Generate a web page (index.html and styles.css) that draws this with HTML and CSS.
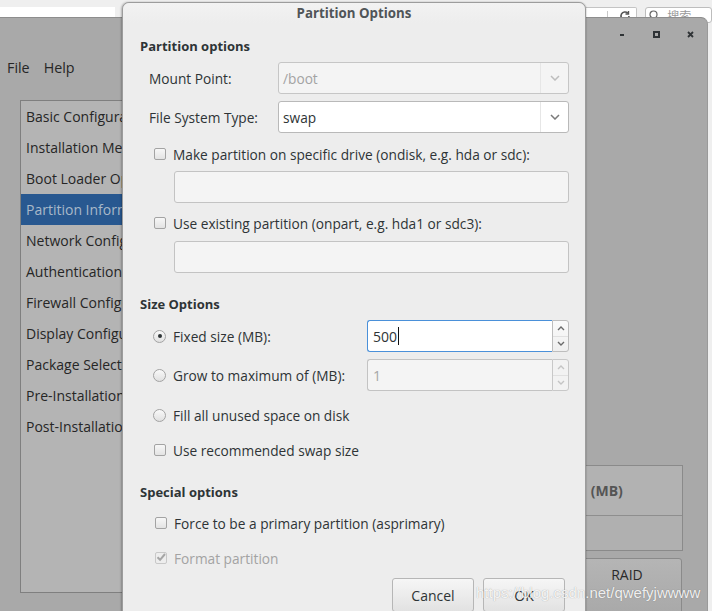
FILE: index.html
```html
<!DOCTYPE html>
<html>
<head>
<meta charset="utf-8">
<title>Partition Options</title>
<link rel="stylesheet" href="styles.css">
</head>
<body>
<div class="screen">
  <div class="browser-strip">
    <div class="addr-left"></div>
    <div class="addr-right">
      <span class="addr-sep"></span>
      <svg class="reload" width="12" height="12" viewBox="0 0 12 12"><path d="M10 6a4 4 0 1 1-1.2-2.9" fill="none" stroke="#555" stroke-width="1.6"/><path d="M9.5 1v3h-3" fill="none" stroke="#555" stroke-width="1.4"/></svg>
    </div>
    <div class="search">
      <svg width="10" height="10" viewBox="0 0 10 10"><circle cx="4.5" cy="4.5" r="3.5" fill="none" stroke="#666" stroke-width="1.2"/></svg>
      <span>搜索</span>
    </div>
  </div>

  <div class="app-window">
    <div class="titlebar">
      <span class="wbtn"><svg width="6" height="6" viewBox="0 0 6 6"><rect x="1" y="3" width="4" height="2" fill="#2f3336"/></svg></span>
      <span class="wbtn"><svg width="7" height="7" viewBox="0 0 7 7"><rect x="1" y="1" width="5" height="5" fill="none" stroke="#2f3336" stroke-width="2"/></svg></span>
      <span class="wbtn"><svg width="7" height="7" viewBox="0 0 7 7"><path d="M1 1l5 5M6 1l-5 5" stroke="#2f3336" stroke-width="1.8"/></svg></span>
    </div>
    <div class="menubar"><span>File</span><span>Help</span></div>
    <div class="app-main">
      <ul class="nav">
        <li>Basic Configuration</li>
        <li>Installation Method</li>
        <li>Boot Loader Options</li>
        <li class="selected">Partition Information</li>
        <li>Network Configuration</li>
        <li>Authentication</li>
        <li>Firewall Configuration</li>
        <li>Display Configuration</li>
        <li>Package Selection</li>
        <li>Pre-Installation Script</li>
        <li>Post-Installation Script</li>
      </ul>
      <div class="content">
        <div class="ptable">
          <div class="ptable-head"><span class="col-size">Size (MB)</span></div>
          <div class="ptable-body"></div>
        </div>
        <div class="pbuttons"><button class="app-btn">RAID</button></div>
      </div>
    </div>
  </div>

  <div class="dialog">
    <div class="dialog-title">Partition Options</div>
    <div class="dialog-body">
      <div class="section-title st-partition">Partition options</div>

      <div class="form-row r-mount">
        <label class="row-label">Mount Point:</label>
        <div class="combo disabled"><span class="combo-text">/boot</span><span class="combo-btn"><svg width="10" height="6" viewBox="0 0 10 6"><path d="M1 1l4 4 4-4" fill="none" stroke="#bdbdbd" stroke-width="1.5"/></svg></span></div>
      </div>
      <div class="form-row r-fs">
        <label class="row-label">File System Type:</label>
        <div class="combo"><span class="combo-text">swap</span><span class="combo-btn"><svg width="10" height="6" viewBox="0 0 10 6"><path d="M1 1l4 4 4-4" fill="none" stroke="#7a7a7a" stroke-width="1.5"/></svg></span></div>
      </div>

      <div class="check-row r-ondisk"><span class="checkbox"></span><span>Make partition on specific drive (ondisk, e.g. hda or sdc):</span></div>
      <div class="entry r-ondisk-entry"></div>
      <div class="check-row r-onpart"><span class="checkbox"></span><span>Use existing partition (onpart, e.g. hda1 or sdc3):</span></div>
      <div class="entry r-onpart-entry"></div>

      <div class="section-title st-size">Size Options</div>

      <div class="spin-row r-fixed">
        <div class="radio-label"><span class="radio checked"></span><span>Fixed size (MB):</span></div>
        <div class="spin focused">
          <div class="spin-entry"><span>500</span><span class="caret"></span></div>
          <div class="spin-btns">
            <span class="sb"><svg width="8" height="5" viewBox="0 0 8 5"><path d="M1 4l3-3 3 3" fill="none" stroke="#6a6a6a" stroke-width="1.4"/></svg></span>
            <span class="sb"><svg width="8" height="5" viewBox="0 0 8 5"><path d="M1 1l3 3 3-3" fill="none" stroke="#6a6a6a" stroke-width="1.4"/></svg></span>
          </div>
        </div>
      </div>
      <div class="spin-row r-grow">
        <div class="radio-label"><span class="radio"></span><span>Grow to maximum of (MB):</span></div>
        <div class="spin disabled">
          <div class="spin-entry"><span>1</span></div>
          <div class="spin-btns">
            <span class="sb"><svg width="8" height="5" viewBox="0 0 8 5"><path d="M1 4l3-3 3 3" fill="none" stroke="#c4c4c4" stroke-width="1.4"/></svg></span>
            <span class="sb"><svg width="8" height="5" viewBox="0 0 8 5"><path d="M1 1l3 3 3-3" fill="none" stroke="#c4c4c4" stroke-width="1.4"/></svg></span>
          </div>
        </div>
      </div>
      <div class="check-row r-fill"><span class="radio"></span><span>Fill all unused space on disk</span></div>
      <div class="check-row r-recommended"><span class="checkbox"></span><span>Use recommended swap size</span></div>

      <div class="section-title st-special">Special options</div>
      <div class="check-row special r-primary"><span class="checkbox"></span><span>Force to be a primary partition (asprimary)</span></div>
      <div class="check-row special r-format disabled"><span class="checkbox checked"><svg width="12" height="12" viewBox="0 0 12 12"><path d="M2.5 6.2l2.6 2.6L10 3" fill="none" stroke="#a6a6a6" stroke-width="2"/></svg></span><span>Format partition</span></div>

      <div class="dialog-buttons">
        <button class="btn">Cancel</button>
        <button class="btn">OK</button>
      </div>
    </div>
  </div>

  <div class="watermark">https://blog.csdn.net/qwefyjwwww</div>
</div>
</body>
</html>
```

FILE: styles.css
```css
* { box-sizing: border-box; margin: 0; padding: 0; }
html, body { width: 712px; height: 611px; overflow: hidden; }
body {
  font-family: "Open Sans", "DejaVu Sans", sans-serif;
  font-size: 13.7px;
  color: #2e3436;
  background: #efefef;
}
.screen { position: relative; width: 712px; height: 611px; overflow: hidden; background: #efefef; }

/* browser strip behind everything */
.browser-strip { height: 19px; display: flex; align-items: flex-start; }
.addr-left { margin-top: 7px; width: 121px; height: 11px; background: #fff; border-bottom: 1px solid #8a8a8a; }
.addr-right {
  margin-top: 7px; margin-left: 466px; width: 59px; height: 14px;
  background: #fff; border: 1px solid #c4c4c4; border-left: none; border-radius: 0 2px 2px 0;
  display: flex; align-items: flex-start;
}
.addr-sep { margin-left: 26px; margin-top: 3px; width: 1px; height: 9px; background: #c8c8c8; }
.reload { margin-left: 11px; margin-top: 2px; }
.search {
  margin-top: 7px; margin-left: 8px; width: 70px; height: 16px;
  background: #fff; border: 1px solid #bdbdbd; border-radius: 3px;
  display: flex; align-items: flex-start; gap: 8px; padding-left: 3px; padding-top: 2px;
  color: #9a9a9a; font-size: 12px; line-height: 12px;
  font-family: "Noto Sans CJK SC", sans-serif;
}

/* application window behind dialog */
.app-window {
  position: absolute; left: -10px; top: 17px; width: 718px; height: 600px;
  background: #a9a9a9; border-top: 1px solid #8d8d8d; border-right: 1px solid #9a9a9a;
  border-top-right-radius: 7px; z-index: 1;
}
.titlebar { height: 32px; display: flex; justify-content: flex-end; align-items: center; }
.wbtn { width: 34px; height: 32px; display: flex; align-items: center; justify-content: center; }
.menubar { height: 34px; display: flex; align-items: center; gap: 14px; padding-left: 17px; color: #262626; font-size: 14.3px; }
.app-main { display: flex; padding: 16px 24px 0 30px; }
.nav {
  list-style: none; width: 140px; height: 493px; flex: none;
  background: #b4b4b4; border: 1px solid #7f7f7f; border-right: none;
}
.nav li { height: 31px; line-height: 32px; padding-left: 5px; white-space: nowrap; color: #262626; font-size: 14px; }
.nav li.selected { background: #285890; color: #a9b8c9; }
.content { flex: 1; display: flex; flex-direction: column; align-items: flex-end; }
.ptable { margin-top: 365px; width: 200px; height: 86px; border: 1px solid #8a8a8a; background: #b0b0b0; }
.ptable-head { height: 50px; border-bottom: 1px solid #8e8e8e; background: #b2b2b2; display: flex; align-items: center; padding-left: 68px; }
.col-size { font-weight: 700; color: #555; font-size: 14px; word-spacing: 8px; }
.pbuttons { margin-top: 7px; margin-right: 1px; }
.app-btn {
  width: 110px; height: 60px; font: inherit; font-size: 14px; color: #2a2a2a;
  background: linear-gradient(#b5b5b5, #a8a8a8); border: 1px solid #8a8a8a; border-radius: 3px;
  padding-bottom: 27px;
}

/* dialog */
.dialog {
  position: absolute; left: 122px; top: 2px; width: 464px; height: 640px; z-index: 2;
  background: #ededed; border: 1px solid #9c9c9c; border-radius: 7px 7px 0 0;
  box-shadow: -1px 0 2px rgba(0,0,0,0.25), 1px 0 1px rgba(0,0,0,0.1);
}
.dialog-title {
  height: 20px; line-height: 20px; text-align: center; font-weight: 700; color: #505558;
  font-size: 13.3px;
  background: linear-gradient(#f2f2f2, #ededed); border-radius: 7px 7px 0 0;
}
.dialog-body { padding: 0 16px 0 17px; display: flex; flex-direction: column; }
.section-title { height: 20px; line-height: 20px; font-weight: 700; color: #2e3436; font-size: 13px; }
.st-partition { margin-top: 13px; }
.st-size { margin-top: 21px; }
.st-special { margin-top: 22px; }

.form-row { display: flex; align-items: center; height: 32px; padding-left: 9px; }
.r-mount { margin-top: 6px; }
.r-fs { margin-top: 7px; }
.row-label { width: 129px; flex: none; }
.combo {
  flex: 1; height: 32px; display: flex; align-items: stretch;
  background: #fff; border: 1px solid #b9b9b9; border-radius: 3px;
}
.combo.disabled { background: #f4f4f4; color: #a3a3a3; border-color: #c6c6c6; }
.combo-text { flex: 1; display: flex; align-items: center; padding-left: 4px; }
.combo-btn { width: 28px; display: flex; align-items: center; justify-content: center; border-left: 1px solid #e6e6e6; }

.check-row { display: flex; align-items: center; height: 20px; padding-left: 14px; }
.check-row.special { padding-left: 15px; }
.check-row.disabled { color: #a3a3a3; }
.checkbox {
  width: 12px; height: 12px; flex: none; margin-right: 7px; border-radius: 2px;
  border: 1px solid #a3a3a3; background: linear-gradient(#f7f7f7, #e3e3e3);
  display: flex; align-items: center; justify-content: center; position: relative;
}
.checkbox.checked { border-color: #c8c8c8; background: #ededed; }
.checkbox.checked svg { position: absolute; left: -1px; top: -2px; }
.radio {
  width: 13px; height: 13px; flex: none; margin-right: 7px; border-radius: 50%;
  border: 1px solid #a3a3a3; background: linear-gradient(#f9f9f9, #e0e0e0);
  display: flex; align-items: center; justify-content: center;
}
.radio.checked::after { content: ""; width: 4px; height: 4px; border-radius: 50%; background: #2e3436; }
.check-row .radio { margin-left: -1px; }

.r-ondisk { margin-top: 11px; }
.entry { margin-left: 34px; height: 32px; background: #f4f4f4; border: 1px solid #c3c3c3; border-radius: 3px; }
.r-ondisk-entry { margin-top: 7px; }
.r-onpart { margin-top: 10px; }
.r-onpart-entry { margin-top: 8px; }

.spin-row { display: flex; align-items: center; height: 32px; padding-left: 13px; }
.r-fixed { margin-top: 6px; }
.r-grow { margin-top: 7px; }
.radio-label { width: 214px; flex: none; display: flex; align-items: center; }
.spin { flex: 1; height: 32px; display: flex; }
.spin-entry {
  flex: 1; display: flex; align-items: center; padding-left: 5px;
  background: #fff; border: 1px solid #4a90d9; border-right: none; border-radius: 3px 0 0 3px;
  font-size: 14px;
}
.caret { width: 1px; height: 18px; background: #111; margin-left: 1px; }
.spin.disabled .spin-entry { background: #f4f4f4; border-color: #c3c3c3; color: #a6a6a6; }
.spin-btns {
  width: 17px; display: flex; flex-direction: column;
  border: 1px solid #bdbdbd; border-radius: 0 3px 3px 0; background: linear-gradient(#fafafa, #efefef);
}
.spin.disabled .spin-btns { border-color: #c8c8c8; background: #f2f2f2; }
.sb { flex: 1; display: flex; align-items: center; justify-content: center; }
.sb + .sb { border-top: 1px solid #e0e0e0; }

.r-fill { margin-top: 14px; }
.r-recommended { margin-top: 15px; }
.r-primary { margin-top: 11px; }
.r-format { margin-top: 15px; }

.dialog-buttons { display: flex; justify-content: flex-end; gap: 9px; margin-top: 10px; padding-right: 4px; }
.btn {
  width: 82px; height: 34px; font: inherit; font-size: 14px; color: #2e3436;
  background: linear-gradient(#f6f6f6, #e2e2e2); border: 1px solid #b6b6b6; border-radius: 3px;
}

.watermark {
  position: absolute; left: 476px; top: 584px; z-index: 3;
  font-family: "Liberation Sans", Arial, sans-serif; font-size: 15px;
  color: rgba(255,255,255,0.9); text-shadow: 0 0 1px rgba(0,0,0,0.35);
  white-space: nowrap;
}
```
